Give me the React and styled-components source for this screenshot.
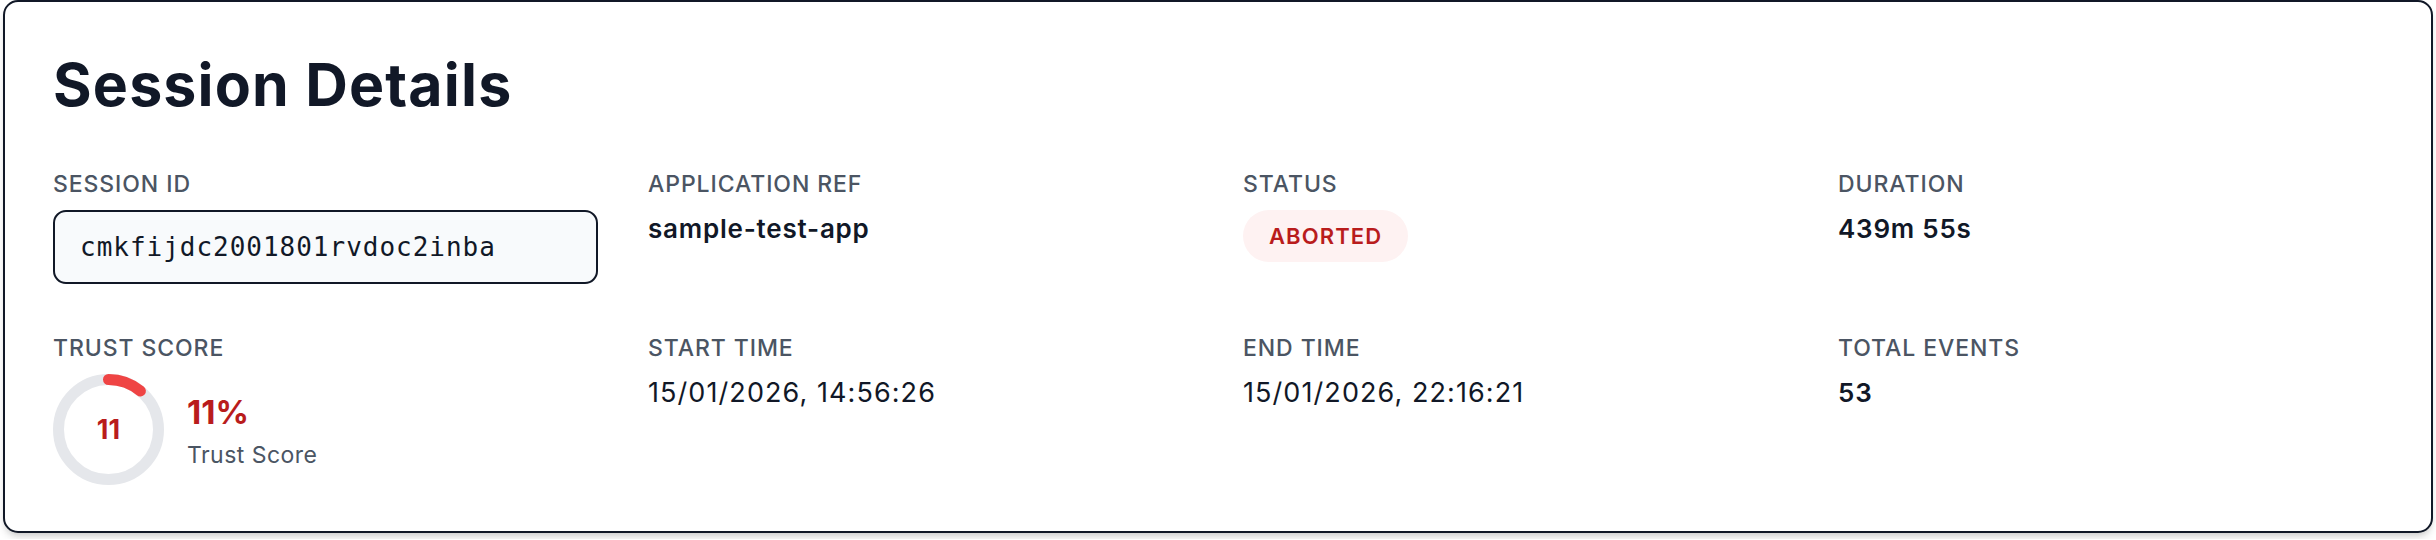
import styled, { createGlobalStyle } from "styled-components";

const GlobalStyle = createGlobalStyle`
  * { box-sizing: border-box; }
  body {
    margin: 0;
    background: #ffffff;
    font-family: Inter, "Noto Sans", sans-serif;
    color: #111827;
  }
`;

const fields = [
  { label: "Application Ref", value: "sample-test-app", strong: true },
  { label: "Status", badge: "Aborted" },
  { label: "Duration", value: "439m 55s", strong: true },
];

const times = [
  { label: "Start Time", value: "15/01/2026, 14:56:26" },
  { label: "End Time", value: "15/01/2026, 22:16:21" },
  { label: "Total Events", value: "53", strong: true },
];

const score = 11;

const App = () => {
  const radius = 50;
  const circumference = 2 * Math.PI * radius;
  const arc = (score / 100) * circumference;

  return (
    <Page>
      <GlobalStyle />
      <Card>
        <Title>Session Details</Title>
        <Grid>
          <Field>
            <Label>Session ID</Label>
            <IdBox>cmkfijdc2001801rvdoc2inba</IdBox>
          </Field>
          {fields.map((f) => (
            <Field key={f.label}>
              <Label>{f.label}</Label>
              {f.badge ? (
                <div>
                  <Badge>{f.badge}</Badge>
                </div>
              ) : (
                <Value $strong={f.strong}>{f.value}</Value>
              )}
            </Field>
          ))}
          <Field>
            <Label>Trust Score</Label>
            <ScoreRow>
              <Donut>
                <svg width="111" height="111" viewBox="0 0 111 111">
                  <circle cx="55.5" cy="55.5" r={radius} fill="none" stroke="#e5e7eb" strokeWidth="11" />
                  <circle
                    cx="55.5"
                    cy="55.5"
                    r={radius}
                    fill="none"
                    stroke="#ef4444"
                    strokeWidth="11"
                    strokeLinecap="round"
                    strokeDasharray={`${arc} ${circumference}`}
                    transform="rotate(-90 55.5 55.5)"
                  />
                </svg>
                <DonutNumber>{score}</DonutNumber>
              </Donut>
              <ScoreText>
                <Percent>{score}%</Percent>
                <ScoreCaption>Trust Score</ScoreCaption>
              </ScoreText>
            </ScoreRow>
          </Field>
          {times.map((f) => (
            <Field key={f.label}>
              <Label>{f.label}</Label>
              <Value $strong={f.strong}>{f.value}</Value>
            </Field>
          ))}
        </Grid>
      </Card>
    </Page>
  );
};

const Page = styled.div`
  padding: 0 3px 6px 3px;
`;

const Card = styled.section`
  background: #fff;
  border: 2px solid #111827;
  border-radius: 15px;
  padding: 52px 48px 46px;
  box-shadow: 0 6px 9px -2px rgba(0, 0, 0, 0.14), 0 3px 6px -3px rgba(0, 0, 0, 0.12);
`;

const Title = styled.h1`
  margin: 0 0 53px;
  font-size: 59px;
  line-height: 62px;
  font-weight: 700;
  letter-spacing: 0.02em;
  color: #111827;
`;

const Grid = styled.div`
  display: grid;
  grid-template-columns: repeat(4, 1fr);
  column-gap: 50px;
  row-gap: 49px;
`;

const Field = styled.div`
  display: flex;
  flex-direction: column;
  min-width: 0;
`;

const Label = styled.div`
  font-size: 23px;
  line-height: 31px;
  font-weight: 500;
  text-transform: uppercase;
  letter-spacing: 0.04em;
  color: #4b5563;
  margin-bottom: 10px;
`;

const Value = styled.div`
  font-size: ${(p) => (p.$strong ? 26 : 27)}px;
  line-height: 38px;
  font-weight: ${(p) => (p.$strong ? 600 : 400)};
  letter-spacing: ${(p) => (p.$strong ? 0.03 : 0.04)}em;
  color: #111827;
`;

const IdBox = styled.div`
  height: 74px;
  display: flex;
  align-items: center;
  padding: 0 25px;
  border: 2px solid #111827;
  border-radius: 13px;
  background: #f8fafc;
  font-family: "DejaVu Sans Mono", "Liberation Mono", monospace;
  font-size: 26px;
  letter-spacing: 0.98px;
  color: #111827;
`;

const Badge = styled.span`
  display: inline-flex;
  align-items: center;
  height: 52px;
  padding: 0 26px;
  border-radius: 999px;
  background: #fef2f2;
  color: #b91c1c;
  font-size: 22px;
  font-weight: 600;
  text-transform: uppercase;
  letter-spacing: 0.05em;
`;

const ScoreRow = styled.div`
  display: flex;
  align-items: center;
  gap: 23px;
`;

const Donut = styled.div`
  position: relative;
  width: 111px;
  height: 111px;
  flex-shrink: 0;

  svg {
    display: block;
  }
`;

const DonutNumber = styled.span`
  position: absolute;
  inset: 0;
  display: flex;
  align-items: center;
  justify-content: center;
  font-size: 27px;
  font-weight: 700;
  color: #b91c1c;
`;

const ScoreText = styled.div`
  display: flex;
  flex-direction: column;
  padding-top: 4px;
`;

const Percent = styled.div`
  font-size: 33px;
  line-height: 40px;
  font-weight: 700;
  color: #b91c1c;
`;

const ScoreCaption = styled.div`
  font-size: 23px;
  line-height: 31px;
  margin-top: 8px;
  letter-spacing: 0.02em;
  color: #4b5563;
`;

export default App;
